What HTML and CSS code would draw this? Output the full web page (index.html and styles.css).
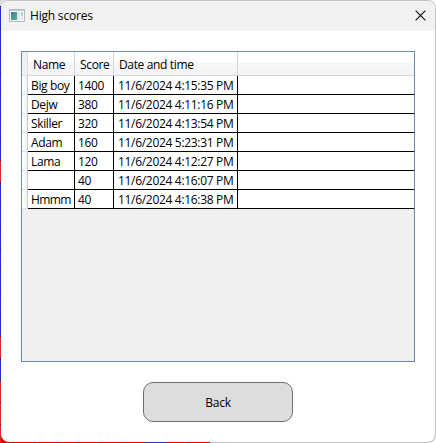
FILE: index.html
```
<!DOCTYPE html>
<html lang="en">
<head>
<meta charset="utf-8">
<title>High scores</title>
<link rel="stylesheet" href="styles.css">
</head>
<body>
<div class="window">
  <header class="titlebar">
    <svg class="app-icon" width="16" height="13" viewBox="0 0 16 13">
      <defs><linearGradient id="g" x1="0" y1="0" x2="1" y2="1"><stop offset="0" stop-color="#4778b4"/><stop offset="1" stop-color="#50b878"/></linearGradient></defs>
      <rect x=".5" y=".5" width="15" height="12" fill="#f4f6f7" stroke="#b3b8bc"/>
      <path d="M1 1.5H15" stroke="#c8ccd0"/>
      <rect x="2" y="3" width="6" height="8" fill="url(#g)"/>
      <rect x="8" y="3" width="3" height="8" fill="#dfe6ea"/>
      <rect x="12" y="3" width="2" height="4" fill="#a9d8bd"/>
      <rect x="12" y="7" width="2" height="4" fill="#e3e7e9"/>
    </svg>
    <h1 class="title">High scores</h1>
    <svg class="close" width="11" height="11" viewBox="0 0 11 11"><path d="M.6 .6L10.4 10.4M10.4 .6L.6 10.4" stroke="#111" stroke-width="1.15"/></svg>
  </header>
  <main class="content">
    <div class="grid">
      <div class="row head"><i class="gutter"></i><span>Name</span><span>Score</span><span>Date and time</span><span></span></div>
      <div class="row"><i class="gutter"></i><span>Big boy</span><span>1400</span><span class="date">11/6/2024 4:15:35 PM</span><span></span></div>
      <div class="row"><i class="gutter"></i><span>Dejw</span><span>380</span><span class="date">11/6/2024 4:11:16 PM</span><span></span></div>
      <div class="row"><i class="gutter"></i><span>Skiller</span><span>320</span><span class="date">11/6/2024 4:13:54 PM</span><span></span></div>
      <div class="row"><i class="gutter"></i><span>Adam</span><span>160</span><span class="date">11/6/2024 5:23:31 PM</span><span></span></div>
      <div class="row"><i class="gutter"></i><span>Lama</span><span>120</span><span class="date">11/6/2024 4:12:27 PM</span><span></span></div>
      <div class="row"><i class="gutter"></i><span></span><span>40</span><span class="date">11/6/2024 4:16:07 PM</span><span></span></div>
      <div class="row"><i class="gutter"></i><span class="tight">Hmmm</span><span>40</span><span class="date">11/6/2024 4:16:38 PM</span><span></span></div>
    </div>
    <button class="back">Back</button>
  </main>
</div>
</body>
</html>
```
FILE: styles.css
```
* { box-sizing: border-box; }
html { height: 100%; }
body {
  margin: 0;
  height: 443px;
  padding: 0 0 0 1px;
  overflow: hidden;
  font: 12px/16px "Open Sans", "Noto Sans", sans-serif;
  letter-spacing: -0.35px;
  color: #000;
  background:
    linear-gradient(#fff, #fff) 100% 0 / 225px 5px no-repeat,
    linear-gradient(#ddd, #ddd) 0 0 / 211px 6px no-repeat,
    repeating-linear-gradient(90deg, transparent 0 12px, #333 12px 14px, transparent 14px 22px) 0 100% / 211px 1px no-repeat,
    linear-gradient(#2b2bd0, #2b2bd0) 146px 100% / 21px 1px no-repeat,
    repeating-linear-gradient(transparent 0 6px, #222 6px 7px, transparent 7px 22px) 0 0 / 1px 430px no-repeat,
    linear-gradient(#2b2bd0 0 160px, #d62b2b 160px 182px, #2b2bd0 182px 336px, #d62b2b 336px 358px, #2b2bd0 358px 380px, #d62b2b 380px) 0 0 / 1px 100% no-repeat,
    linear-gradient(90deg, #e00000 0 211px, #fff 211px);
}
.window {
  position: relative;
  height: 442px;
  border-top: 1px solid #c4c4c4;
  border-right: 1px solid #c4c4c4;
  border-radius: 8px;
  background: #fff;
}
.window::after {
  content: "";
  position: absolute;
  right: -1px;
  bottom: -1px;
  width: 225px;
  height: 20px;
  border: solid #c4c4c4;
  border-width: 0 1px 1px 0;
  border-radius: 0 0 8px;
}
.titlebar {
  display: flex;
  align-items: center;
  height: 30px;
  padding: 0 9px 0 8px;
  border-radius: 7px 7px 0 0;
  background: #f2f2f2;
}
.app-icon { margin-bottom: 2px; }
.title {
  flex: 1;
  margin: 0 0 0 5px;
  font-size: 12px;
  font-weight: 400;
  letter-spacing: -0.2px;
}
.close { margin-bottom: 2px; }
.content { padding: 20px 20px 0; }
.grid {
  width: 394px;
  height: 311px;
  border: 1px solid #688caf;
  background: #f0f0f0;
}
.row {
  display: grid;
  grid-template-columns: 6px 47px 39px 124px 1fr;
  grid-template-rows: 100%;
  height: 19px;
  background: #fff;
}
.row span {
  padding-left: 3px;
  line-height: 20px;
  white-space: nowrap;
  border-right: 1px solid #000;
  border-bottom: 1px solid #000;
}
.row .date { padding-left: 4px; letter-spacing: -0.31px; }
.row .tight { letter-spacing: -0.6px; }
.row span:last-child { border-right: 0; }
.gutter {
  background: linear-gradient(90deg, #fff, #f2f3f4);
  border-right: 1px solid #c9caca;
  border-bottom: 1px solid #e1e1e1;
}
.row.head {
  height: 24px;
  background: linear-gradient(#fff 0 40%, #f7f8fa 40%, #f1f2f4);
}
.row.head span {
  padding-left: 5px;
  line-height: 26px;
  border-color: #d5d5d5;
}
.head .gutter { background: #f0f0f0; border-color: #dfdfdf; }
.back {
  display: block;
  width: 150px;
  height: 40px;
  margin: 20px auto 0;
  padding: 2px 0 0;
  border: 1px solid #707070;
  border-radius: 10px;
  background: #ddd;
  color: #000;
  font: inherit;
  letter-spacing: -0.2px;
}
```
